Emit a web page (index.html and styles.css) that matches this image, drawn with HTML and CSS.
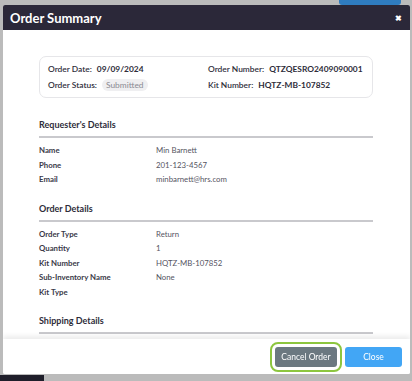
FILE: index.html
```html
<!DOCTYPE html>
<html lang="en">
<head>
    <meta charset="UTF-8">
    <meta name="viewport" content="width=device-width, initial-scale=1.0">
    <title>Order Summary</title>
    <link rel="stylesheet" href="styles.css">
</head>
<body>
    <div class="pagina">
        <div class="pagina-botao"></div>
        <div class="pagina-rodape"></div>
    </div>

    <div class="modal">
        <div class="modal-topo">
            <h1 class="modal-titulo">Order Summary</h1>
            <span class="modal-fechar">&#10006;</span>
        </div>

        <div class="modal-corpo">
            <div class="resumo">
                <div class="resumo-item"><b>Order Date:</b> 09/09/2024</div>
                <div class="resumo-item"><b>Order Number:</b> QTZQESRO2409090001</div>
                <div class="resumo-item"><b>Order Status:</b> <span class="status">Submitted</span></div>
                <div class="resumo-item"><b>Kit Number:</b> HQTZ-MB-107852</div>
            </div>

            <div class="secao">
                <h2 class="secao-titulo">Requester's Details</h2>
                <div class="linha"><span class="rotulo">Name</span><span class="valor">Min Barnett</span></div>
                <div class="linha"><span class="rotulo">Phone</span><span class="valor">201-123-4567</span></div>
                <div class="linha"><span class="rotulo">Email</span><span class="valor">minbarnett@hrs.com</span></div>
            </div>

            <div class="secao">
                <h2 class="secao-titulo">Order Details</h2>
                <div class="linha"><span class="rotulo">Order Type</span><span class="valor">Return</span></div>
                <div class="linha"><span class="rotulo">Quantity</span><span class="valor">1</span></div>
                <div class="linha"><span class="rotulo">Kit Number</span><span class="valor">HQTZ-MB-107852</span></div>
                <div class="linha"><span class="rotulo">Sub-Inventory Name</span><span class="valor">None</span></div>
                <div class="linha"><span class="rotulo">Kit Type</span><span class="valor"></span></div>
            </div>

            <div class="secao">
                <h2 class="secao-titulo">Shipping Details</h2>
            </div>
        </div>

        <div class="modal-rodape">
            <button class="botao botao-cancelar">Cancel Order</button>
            <button class="botao botao-fechar">Close</button>
        </div>
    </div>
</body>
</html>
```

FILE: styles.css
```css
*{
    box-sizing: border-box;
    font-family: Lato, "Open Sans", sans-serif;
}

body{
    margin: 0;
    background-color: #bbbbbb;
    height: 381px;
    overflow: hidden;
}

/* page behind the overlay */
.pagina-botao{
    position: absolute;
    top: 0;
    left: 339px;
    width: 62px;
    height: 5px;
    background-color: #2f7cc0;
    border-radius: 0 0 3px 3px;
}

.pagina-rodape{
    position: absolute;
    top: 375px;
    left: 0;
    width: 44px;
    height: 6px;
    background-color: #1f1e2a;
}

.modal{
    position: fixed;
    top: 5px;
    left: 3px;
    width: 407px;
    height: 369px;
    background-color: #ffffff;
    display: flex;
    flex-direction: column;
    border-radius: 2px;
    overflow: hidden;
}

.modal-topo{
    height: 25px;
    background-color: #2b2839;
    display: flex;
    align-items: center;
    justify-content: space-between;
    padding: 0 8px 0 7px;
    color: #ffffff;
}

.modal-titulo{
    margin: 0;
    font-size: 13px;
    font-weight: 700;
}

.modal-fechar{
    font-size: 8px;
    font-weight: 700;
}

.modal-corpo{
    flex: 1;
    overflow: hidden;
    padding: 26px 37px 0 36px;
}

.resumo{
    border: 1px solid #e6e6e9;
    border-radius: 7px;
    padding: 6px 8px;
    display: grid;
    grid-template-columns: 160px 1fr;
    row-gap: 4px;
}

.resumo-item{
    font-size: 8.4px;
    font-weight: 700;
    line-height: 12px;
    color: #2e2d3a;
    white-space: nowrap;
}

.resumo-item b{
    font-weight: 600;
    margin-right: 3px;
}

.status{
    display: inline-block;
    font-weight: 400;
    color: #8a8a92;
    background-color: #efeff1;
    border-radius: 6px;
    padding: 0 4px;
    line-height: 12px;
}

.secao{
    margin-top: 16px;
}

.resumo + .secao{
    margin-top: 21px;
}

.secao-titulo{
    margin: 0 0 4px 0;
    font-size: 9px;
    font-weight: 700;
    line-height: 12px;
    color: #2e2d3a;
    padding-bottom: 5px;
    border-bottom: 2px solid #c9c9cd;
}

.linha{
    display: grid;
    grid-template-columns: 117px 1fr;
    line-height: 14.5px;
    font-size: 7.8px;
}

.secao-titulo + .linha{
    margin-top: 5px;
}

.rotulo{
    font-weight: 700;
    color: #3a3948;
}

.valor{
    color: #55545f;
}

.modal-rodape{
    position: relative;
    height: 35px;
    display: flex;
    align-items: center;
    justify-content: flex-end;
    gap: 8px;
    padding-right: 8px;
    background-color: #ffffff;
    box-shadow: 0 -3px 5px rgba(0, 0, 0, 0.08);
}

.botao{
    height: 20px;
    border: none;
    border-radius: 3px;
    color: #ffffff;
    font-size: 8.5px;
    padding: 0;
}

.botao-cancelar{
    width: 62px;
    background-color: #6b7880;
    outline: 2px solid #8dc63f;
    outline-offset: 3px;
}

.botao-fechar{
    width: 57px;
    background-color: #42a6f5;
}
```
